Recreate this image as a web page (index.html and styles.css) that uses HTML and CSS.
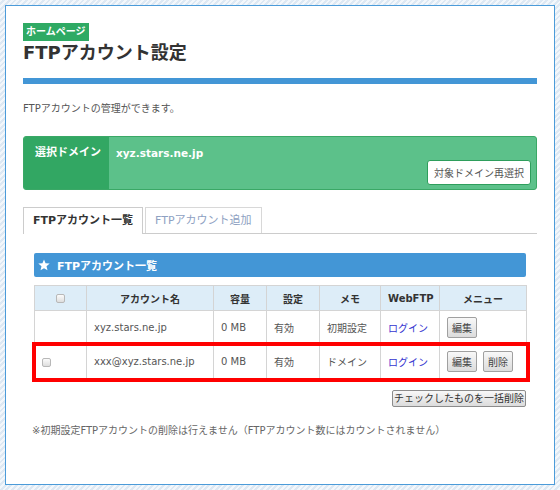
FILE: index.html
```html
<!DOCTYPE html>
<html>
<head>
  <meta charset="utf-8">
  <title>FTPアカウント設定</title>
  <link rel="stylesheet" href="styles.css">
</head>
<body>
  <div class="panel">
    <span class="badge">ホームページ</span>
    <h1 class="page-title">FTPアカウント設定</h1>
    <div class="title-bar"></div>

    <p class="lead">FTPアカウントの管理ができます。</p>

    <div class="domain-box">
      <div class="domain-label">選択ドメイン</div>
      <div class="domain-value">
        <span class="domain-name">xyz.stars.ne.jp</span>
        <button class="btn-reselect">対象ドメイン再選択</button>
      </div>
    </div>

    <div class="tabs">
      <div class="tab active">FTPアカウント一覧</div>
      <div class="tab">FTPアカウント追加</div>
    </div>

    <div class="tab-body">
      <div class="section-head">
        <svg class="star" width="12" height="12" viewBox="0 0 24 24">
          <polygon fill="#fff" points="12,1 15.1,8.6 23.4,9.2 17,14.6 19,22.7 12,18.3 5,22.7 7,14.6 0.6,9.2 8.9,8.6"/>
        </svg>
        FTPアカウント一覧
      </div>

      <table class="account-table">
        <colgroup>
          <col style="width: 52px">
          <col style="width: 127px">
          <col style="width: 53px">
          <col style="width: 53px">
          <col style="width: 61px">
          <col style="width: 59px">
          <col style="width: 87px">
        </colgroup>
        <thead>
          <tr>
            <th><input type="checkbox" class="chk"></th>
            <th>アカウント名</th>
            <th>容量</th>
            <th>設定</th>
            <th>メモ</th>
            <th>WebFTP</th>
            <th>メニュー</th>
          </tr>
        </thead>
        <tbody>
          <tr>
            <td></td>
            <td>xyz.stars.ne.jp</td>
            <td>0 MB</td>
            <td>有効</td>
            <td>初期設定</td>
            <td><a href="#" class="login">ログイン</a></td>
            <td><button class="btn-small">編集</button></td>
          </tr>
          <tr class="marked">
            <td><input type="checkbox" class="chk"></td>
            <td>xxx@xyz.stars.ne.jp</td>
            <td>0 MB</td>
            <td>有効</td>
            <td>ドメイン</td>
            <td><a href="#" class="login">ログイン</a></td>
            <td><button class="btn-small">編集</button><button class="btn-small">削除</button></td>
          </tr>
        </tbody>
      </table>

      <div class="bulk-row">
        <button class="btn-bulk">チェックしたものを一括削除</button>
      </div>

      <p class="note">※初期設定FTPアカウントの削除は行えません（FTPアカウント数にはカウントされません）</p>
    </div>
  </div>
</body>
</html>
```

FILE: styles.css
```css
html, body {
  height: 100%;
}

body {
  margin: 0;
  padding: 5px;
  box-sizing: border-box;
  font-family: "DejaVu Sans", "Noto Sans CJK JP", sans-serif;
  color: #555;
  background: repeating-linear-gradient(135deg, #f3f7fb 0px, #f3f7fb 2px, #dde8f3 2px, #dde8f3 4px);
}

.panel {
  height: 480px;
  box-sizing: border-box;
  background-color: #FFF;
  border: 1px solid #4b9bd9;
  padding: 17px;
}

.badge {
  display: inline-block;
  height: 18px;
  line-height: 18px;
  padding: 0 3px;
  background-color: #2faa64;
  color: #FFF;
  font-size: 10px;
  font-weight: bold;
  vertical-align: top;
}

.page-title {
  margin: 0;
  font-size: 18px;
  line-height: 22px;
  color: #333;
}

.title-bar {
  margin-top: 14px;
  height: 6px;
  background-color: #4396d6;
}

.lead {
  margin: 18px 0 0;
  font-size: 10px;
  line-height: 14px;
}

.domain-box {
  display: flex;
  margin-top: 20px;
  height: 54px;
  box-sizing: border-box;
  border: 1px solid #3aa866;
  border-radius: 3px;
  overflow: hidden;
  background-color: #5cc18a;
}

.domain-label {
  width: 85px;
  padding: 9px 0 0 11px;
  box-sizing: border-box;
  background-color: #32a763;
  color: #FFF;
  font-size: 11px;
  font-weight: bold;
  line-height: 14px;
}

.domain-value {
  flex: 1;
  display: flex;
  flex-direction: column;
  padding: 9px 5px 4px 7px;
}

.domain-name {
  color: #FFF;
  font-size: 10.5px;
  font-weight: bold;
  line-height: 14px;
}

.btn-reselect {
  align-self: flex-end;
  margin-top: auto;
  height: 26px;
  padding: 0 6px;
  background-color: #FFF;
  border: 1px solid #2e9e5c;
  border-radius: 3px;
  font-family: inherit;
  font-size: 10px;
  color: #555;
}

.tabs {
  display: flex;
  gap: 2px;
  margin-top: 17px;
  border-bottom: 1px solid #ccc;
}

.tab {
  height: 25px;
  line-height: 25px;
  padding: 0 9px;
  margin-bottom: -1px;
  border: 1px solid #d8d8d8;
  border-bottom: none;
  font-size: 11px;
  color: #8ea1c2;
}

.tab.active {
  border-color: #ccc;
  background-color: #FFF;
  height: 26px;
  color: #333;
  font-weight: bold;
}

.tab-body {
  padding: 19px 11px 0;
}

.section-head {
  display: flex;
  align-items: center;
  gap: 7px;
  height: 24px;
  padding: 0 4px;
  background-color: #4396d6;
  border-radius: 2px;
  color: #FFF;
  font-size: 11px;
  font-weight: bold;
}

.account-table {
  width: 100%;
  margin-top: 8px;
  border-collapse: collapse;
  table-layout: fixed;
  font-size: 10px;
}

.account-table th,
.account-table td {
  border: 1px solid #d4d4d4;
  padding: 0 7px;
  text-align: left;
  white-space: nowrap;
}

.account-table th {
  height: 24px;
  background-color: #ddedf8;
  color: #333;
  text-align: center;
}

.account-table td {
  height: 33px;
}

.account-table tr.marked {
  outline: 4px solid #f00;
  outline-offset: -1px;
}

.chk {
  appearance: none;
  -webkit-appearance: none;
  width: 9px;
  height: 9px;
  margin: 0;
  border: 1px solid #b8b8b8;
  border-radius: 2px;
  background: linear-gradient(#fbfbfb, #dedede);
  vertical-align: middle;
}

.login {
  color: #3535d0;
  text-decoration: none;
}

.btn-small {
  height: 21px;
  padding: 0 4px;
  margin-right: 6px;
  border: 1px solid #a0a0a0;
  border-radius: 2px;
  background: linear-gradient(#f8f8f8, #dcdcdc);
  font-family: inherit;
  font-size: 10px;
  color: #444;
}

.bulk-row {
  display: flex;
  justify-content: flex-end;
  margin-top: 11px;
}

.btn-bulk {
  height: 17px;
  padding: 0 1px;
  border: 1px solid #8c8c8c;
  border-radius: 2px;
  background: linear-gradient(#f8f8f8, #dcdcdc);
  font-family: inherit;
  font-size: 10px;
  line-height: 14px;
  color: #333;
}

.note {
  margin: 17px 0 0 -2px;
  font-size: 10px;
  line-height: 14px;
  color: #666;
}
```
